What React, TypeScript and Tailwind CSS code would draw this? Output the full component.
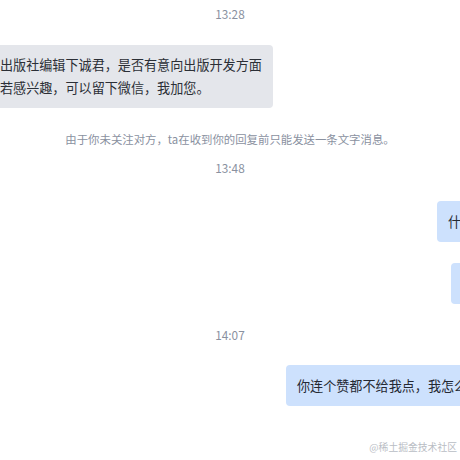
const font = { fontFamily: '"Noto Sans CJK SC", "Noto Sans", sans-serif' };

function Time({ children }: { children: string }) {
    return (
        <div className="text-center text-[11.8px] leading-4 text-[#8a919f]">{children}</div>
    );
}

function MineBubble({ text, inset }: { text: string; inset: string }) {
    return (
        <div className={`flex ${inset}`}>
            <div className="whitespace-nowrap rounded-[4px] bg-[#cde1fd] px-[11px] py-[9.3px] text-[13.1px] leading-[22.4px] text-[#252933]">
                {text}
            </div>
        </div>
    );
}

export default function App() {
    return (
        <div
            className="relative flex h-[460px] w-[460px] flex-col overflow-hidden bg-white pt-[6px]"
            style={font}
        >
            <Time>13:28</Time>

            {/* 对方消息，左侧被裁切 */}
            <div className="mt-[23px] flex">
                <div className="-ml-[12px] w-[285px] rounded-[4px] bg-[#e4e6eb] py-[9.3px] pl-[12px] pr-[10px] text-[13.1px] leading-[22.4px] text-[#2b2f36] whitespace-nowrap">
                    <div>出版社编辑下诚君，是否有意向出版开发方面</div>
                    <div>若感兴趣，可以留下微信，我加您。</div>
                </div>
            </div>

            <div className="mt-[23px] text-center text-[11.4px] leading-4 text-[#8a919f]">
                由于你未关注对方，ta在收到你的回复前只能发送一条文字消息。
            </div>

            <div className="mt-[13px]">
                <Time>13:48</Time>
            </div>

            <div className="mt-[25px]">
                <MineBubble inset="pl-[437px]" text="什么出版社？" />
            </div>
            <div className="mt-[21px]">
                <MineBubble inset="pl-[451px]" text="好的" />
            </div>

            <div className="mt-[23px]">
                <Time>14:07</Time>
            </div>

            <div className="mt-[22px]">
                <MineBubble inset="pl-[286px]" text="你连个赞都不给我点，我怎么给你微信？" />
            </div>

            {/* 水印 */}
            <div className="absolute bottom-[5px] right-[3px] text-[9.8px] leading-4 text-[#b9bdc4]">
                @稀土掘金技术社区
            </div>
        </div>
    );
}
